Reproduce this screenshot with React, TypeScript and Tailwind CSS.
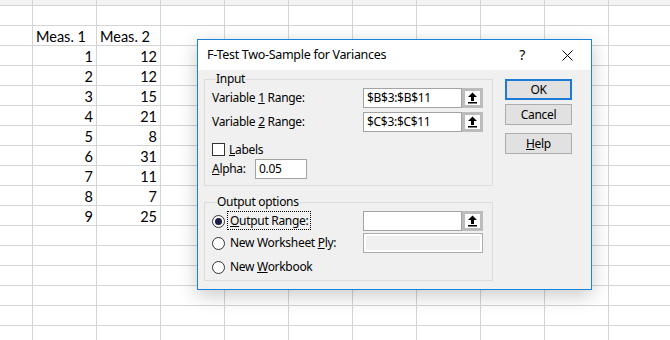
import React from "react";

const colB = ["", "", "Meas. 1", "1", "2", "3", "4", "5", "6", "7", "8", "9"];
const colC = ["", "", "Meas. 2", "12", "12", "15", "21", "8", "31", "11", "7", "25"];

function Sheet() {
  const rows = Array.from({ length: 18 }, (_, i) => i);
  const cols = Array.from({ length: 10 }, (_, i) => i);
  return (
    <div className="flex flex-col">
      {rows.map((r) => {
        const isTop = r === 0;
        const b = colB[r] ?? "";
        const c = colC[r] ?? "";
        const isHead = r === 2;
        return (
          <div
            key={r}
            className={
              isTop
                ? "flex h-[6px] shrink-0 border-b border-[#d4d4d4] bg-[#f3f3f3]"
                : "flex h-[20px] shrink-0 border-b border-[#d4d4d4]"
            }
          >
            <div className="w-[33px] shrink-0 border-r border-[#d4d4d4]" />
            {cols.map((ci) => {
              let txt = "";
              if (ci === 0) txt = b;
              if (ci === 1) txt = c;
              return (
                <div
                  key={ci}
                  className={
                    isHead
                      ? "w-[64px] shrink-0 border-r border-[#d4d4d4] pl-[3px] text-left leading-[21px]"
                      : "w-[64px] shrink-0 border-r border-[#d4d4d4] pr-[3px] text-right leading-[21px]"
                  }
                >
                  {txt}
                </div>
              );
            })}
          </div>
        );
      })}
    </div>
  );
}

function RefButton() {
  return (
    <div className="flex h-[20px] w-[21px] shrink-0 items-center justify-center border-[3px] border-[#bcbcbc] bg-white">
      <svg width="11" height="12" viewBox="0 0 11 12">
        <path d="M5.5 0.5 L10 5 L7 5 L7 9 L4 9 L4 5 L1 5 Z" fill="#000" />
        <rect x="1" y="10" width="9" height="1.5" fill="#000" />
      </svg>
    </div>
  );
}

function Field({ value, w }: { value: string; w: string }) {
  return (
    <div className={`${w} flex h-[20px] shrink-0 items-center border border-[#a3a3a3] bg-white pl-[3px] text-black`}>
      {value}
    </div>
  );
}

function Radio({ checked }: { checked?: boolean }) {
  return (
    <div className="flex h-[13px] w-[13px] shrink-0 items-center justify-center rounded-full border border-[#333] bg-white">
      {checked && <div className="h-[7px] w-[7px] rounded-full bg-[#1c1c4a]" />}
    </div>
  );
}

function Btn({ label, def }: { label: React.ReactNode; def?: boolean }) {
  return (
    <div
      className={
        def
          ? "flex h-[21px] w-[67px] items-center justify-center border-2 border-[#1c7ad4] bg-[#e1e1e1]"
          : "flex h-[21px] w-[67px] items-center justify-center border border-[#adadad] bg-[#e1e1e1]"
      }
    >
      {label}
    </div>
  );
}

function Dialog() {
  return (
    <div
      className="absolute left-[197px] top-[39px] flex h-[251px] w-[395px] flex-col border border-[#1883d7] bg-[#f0f0f0] text-[12px] tracking-[-0.3px] text-black shadow-[0_5px_18px_rgba(0,0,0,0.22)]"
      style={{ fontFamily: '"Noto Sans", sans-serif' }}
    >
      <div className="flex h-[30px] shrink-0 items-center bg-white pl-[9px]">
        <span className="flex-1 text-[12.5px]">F-Test Two-Sample for Variances</span>
        <span className="mr-[37px] text-[14px] leading-none">?</span>
        <svg width="11" height="11" viewBox="0 0 11 11" className="mr-[18px]">
          <path d="M0.5 0.5 L10.5 10.5 M10.5 0.5 L0.5 10.5" stroke="#000" strokeWidth="1" />
        </svg>
      </div>
      <div className="flex flex-1 pl-[6px] pt-[1px]">
        <div className="flex w-[289px] flex-col">
          <fieldset className="m-0 border border-[#dcdcdc] pb-[6px] pl-[7px] pr-[9px] pt-[1px]">
            <legend className="ml-[4px] px-0 leading-[16px]">Input</legend>
            <div className="flex h-[20px] items-center">
              <span className="flex-1">
                Variable <u>1</u> Range:
              </span>
              <Field value="$B$3:$B$11" w="w-[99px]" />
              <RefButton />
            </div>
            <div className="mt-[4px] flex h-[20px] items-center">
              <span className="flex-1">
                Variable <u>2</u> Range:
              </span>
              <Field value="$C$3:$C$11" w="w-[99px]" />
              <RefButton />
            </div>
            <div className="mt-[10px] flex h-[15px] items-center">
              <div className="h-[13px] w-[13px] border border-[#333] bg-white" />
              <span className="ml-[4px]">
                <u>L</u>abels
              </span>
            </div>
            <div className="mt-[2px] flex h-[20px] items-center">
              <span className="w-[43px]">
                <u>A</u>lpha:
              </span>
              <Field value="0.05" w="w-[52px]" />
            </div>
          </fieldset>
          <fieldset className="m-0 mt-[8px] border border-[#dcdcdc] pb-[3px] pl-[7px] pr-[9px] pt-[1px]">
            <legend className="ml-[5px] px-0 leading-[16px]">Output options</legend>
            <div className="flex h-[20px] items-center">
              <Radio checked />
              <span className="ml-[2px] flex-1">
                <span className="border border-dotted border-black px-[2px]">
                  <u>O</u>utput Range:
                </span>
              </span>
              <Field value="" w="w-[99px]" />
              <RefButton />
            </div>
            <div className="mt-[2px] flex h-[20px] items-center">
              <Radio />
              <span className="ml-[5px] flex-1">
                New Worksheet <u>P</u>ly:
              </span>
              <div className="h-[20px] w-[120px] border border-[#adadad] bg-white p-[2px]">
                <div className="h-full w-full bg-[#f0f0f0]" />
              </div>
            </div>
            <div className="mt-[4px] flex h-[20px] items-center">
              <Radio />
              <span className="ml-[5px] flex-1">
                New <u>W</u>orkbook
              </span>
            </div>
          </fieldset>
        </div>
        <div className="ml-[12px] flex flex-col pt-[8px]">
          <Btn label="OK" def />
          <div className="mt-[4px]">
            <Btn label="Cancel" />
          </div>
          <div className="mt-[8px]">
            <Btn
              label={
                <span>
                  <u>H</u>elp
                </span>
              }
            />
          </div>
        </div>
      </div>
    </div>
  );
}

export default function App() {
  return (
    <div
      className="relative h-[340px] w-[670px] overflow-hidden bg-white text-[14.5px] text-black"
      style={{ fontFamily: "Lato, sans-serif" }}
    >
      <Sheet />
      <Dialog />
    </div>
  );
}
